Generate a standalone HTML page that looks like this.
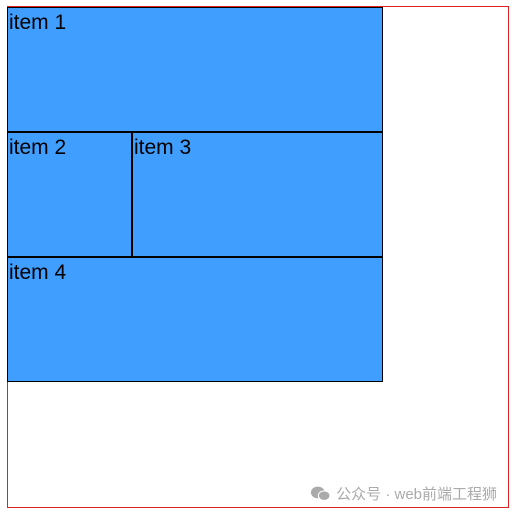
<!DOCTYPE html>
<html><head><meta charset="utf-8"><style>
html,body{margin:0;padding:0;background:#fff;width:519px;height:516px;overflow:hidden}
.c{position:absolute;left:7px;top:6px;width:500px;height:500px;border:1px solid #d22;}
.i{position:absolute;box-sizing:border-box;border:1px solid #000;background:#409eff;font-family:"Liberation Sans",sans-serif;font-size:21px;line-height:24px;color:#000;padding-left:1px;padding-top:3px}
.wm{position:absolute;left:310px;top:483px;font-family:"Liberation Sans","Noto Sans CJK SC",sans-serif;font-size:15px;color:#aaa;white-space:nowrap}
</style></head><body>
<div class="c"></div>
<div class="i" style="left:7px;top:7px;width:376px;height:125px">item 1</div>
<div class="i" style="left:7px;top:132px;width:125px;height:125px">item 2</div>
<div class="i" style="left:132px;top:132px;width:251px;height:125px">item 3</div>
<div class="i" style="left:7px;top:257px;width:376px;height:125px">item 4</div>
<div class="wm"><svg width="22" height="17" viewBox="0 0 20 16" style="vertical-align:-3px"><ellipse cx="7" cy="7" rx="6.5" ry="5.5" fill="#aaa"/><ellipse cx="13" cy="10" rx="5.5" ry="4.5" fill="#aaa" stroke="#fff" stroke-width="1"/></svg> 公众号 · web前端工程狮</div>
</body></html>
